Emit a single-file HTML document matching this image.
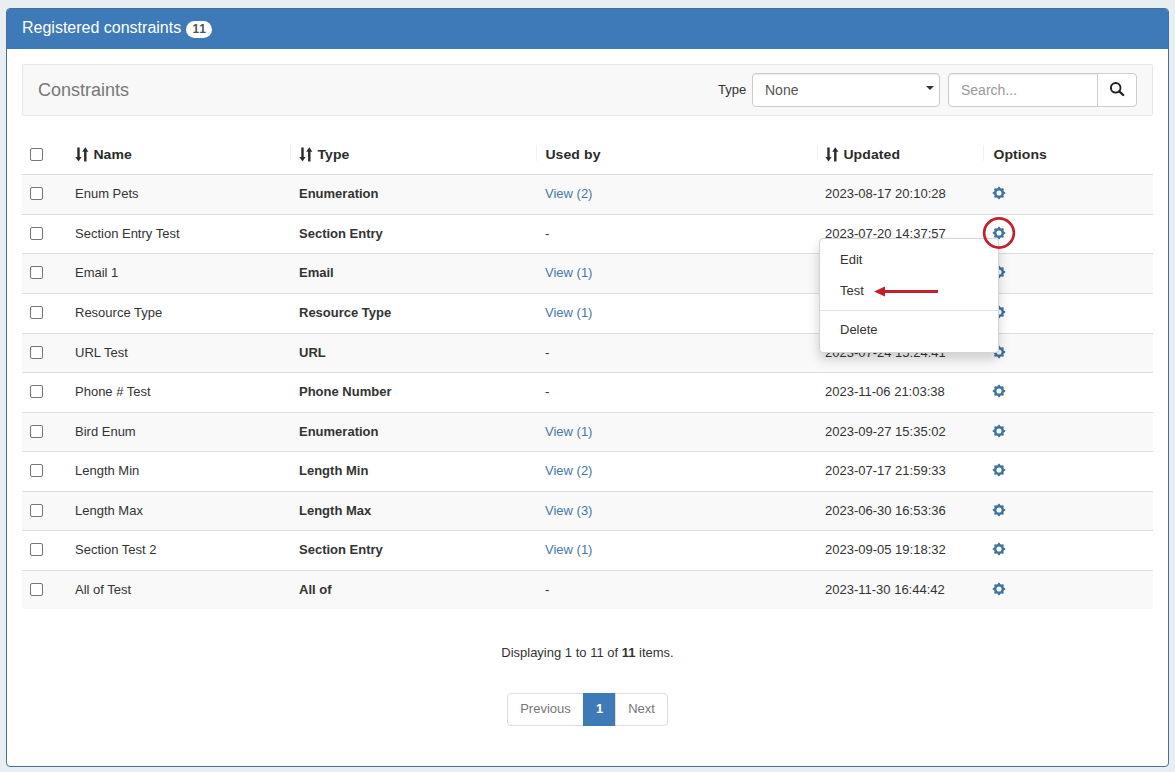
<!DOCTYPE html>
<html><head><meta charset="utf-8"><title>Registered constraints</title>
<style>
*{box-sizing:border-box}
html,body{margin:0;padding:0}
body{width:1175px;height:772px;overflow:hidden;background:#e9eef2;font-family:"Liberation Sans",sans-serif;font-size:13px;color:#333;position:relative}
.panel{position:absolute;left:6px;top:8px;width:1163px;height:759px;background:#fff;border:1px solid #4d6f92;border-radius:4px;overflow:hidden}
.ph{position:absolute;left:-1px;top:-1px;width:1163px;height:41px;background:#3e7ab8;color:#fff;font-size:16px}
.ph .t{position:absolute;left:16px;top:10px;line-height:20px;white-space:nowrap}
.badge{position:absolute;left:180px;top:13px;width:26px;height:17px;border-radius:9px;background:#fff;color:#4a5560;font-size:12px;font-weight:bold;text-align:center;line-height:17px;letter-spacing:0.6px;padding-left:1px}
.tb{position:absolute;left:22px;top:64px;width:1131px;height:52px;background:#f8f8f8;border:1px solid #e7e7e7;border-radius:2px}
.tb .h{position:absolute;left:15px;top:14px;font-size:18px;color:#777;line-height:22px}
.lbl{position:absolute;left:718px;top:82px;line-height:15px;font-size:13px;color:#333}
.sel{position:absolute;left:752px;top:73px;width:188px;height:34px;background:#fff;border:1px solid #ccc;border-radius:4px;font-size:14px;color:#555;line-height:32px;padding-left:12px;box-shadow:inset 0 1px 1px rgba(0,0,0,.075)}
.sel:after{content:"";position:absolute;right:5px;top:12px;border:4px solid transparent;border-top:4px solid #333;border-bottom:0}
.inp{position:absolute;left:948px;top:73px;width:150px;height:34px;background:#fff;border:1px solid #ccc;border-radius:4px 0 0 4px;font-size:14px;color:#999;line-height:32px;padding-left:12px;box-shadow:inset 0 1px 1px rgba(0,0,0,.075)}
.btn{position:absolute;left:1097px;top:73px;width:40px;height:34px;background:#fff;border:1px solid #ccc;border-radius:0 4px 4px 0}
.btn svg{position:absolute;left:11px;top:7px;width:16px;height:16px}
.thead{position:absolute;left:22px;top:135px;width:1131px;height:39px;font-weight:bold;color:#2b2b2b;font-size:14px}
.thead span,.row span{position:absolute;white-space:nowrap;line-height:16px}
.thead span{top:12px}
.thead b{display:inline-block;transform:scaleY(.95);transform-origin:0 12.6px;letter-spacing:.1px;position:relative;left:.4px;top:-.8px}
.row{position:absolute;left:22px;width:1131px;border-top:1px solid #ddd;background:#fff}
.row.odd{background:#f9f9f9}
.row span{top:11px}
.cb{left:8px;width:13px;height:13px;border:1px solid #767676;border-radius:2px;background:#fff}
.row .cb{top:12px} .thead .cb{top:13px}
.c1{left:53px} .c2{left:277px;font-weight:bold} .c3{left:523px} .c4{left:803px} .c5{left:971px}
.thead .c1,.thead .c2,.thead .c4{padding-left:18px}
.lnk{color:#4678a8;position:static!important}
.gear{position:absolute;left:970.3px;top:10.6px;width:14px;height:14px;fill:#41739f}
.sort{position:absolute;left:0.2px;top:-0.3px;width:14px;height:15px;fill:#2b2b2b}
.sep{position:absolute;top:10px;width:1px;height:16px;background:#f1f1f1}
.info{position:absolute;left:0;top:645px;width:1175px;text-align:center;line-height:16px}
.pg{position:absolute;top:693px;height:33px;border:1px solid #ddd;background:#fff;color:#777;font-size:13px;line-height:29px;text-align:center}
.menu{position:absolute;left:819px;top:238px;width:180px;height:115px;background:#fff;border:1px solid #d4d4d4;border-radius:4px;box-shadow:0 6px 12px rgba(0,0,0,.175);font-size:13px;color:#333}
.menu span{position:absolute;left:20px;line-height:16px}
.menu .dv{position:absolute;left:0;top:71px;width:178px;height:1px;background:#e5e5e5}
.circ{position:absolute;left:982.3px;top:216px;width:34px;height:34px}
.arrow{position:absolute;left:872px;top:283px;width:70px;height:16px}
</style></head><body>
<div class="panel"><div class="ph"><span class="t">Registered constraints</span><span class="badge">11</span></div></div>
<div class="tb"><span class="h">Constraints</span></div>
<span class="lbl">Type</span>
<div class="sel">None</div>
<div class="inp">Search...</div>
<div class="btn"><svg viewBox="0 0 16 16"><circle cx="6.7" cy="6.85" r="4.8" fill="none" stroke="#222" stroke-width="1.9"/><path d="M10.2 10.3L14.2 14.0" stroke="#222" stroke-width="2.3" stroke-linecap="round"/></svg></div>
<div class="thead"><span class="cb"></span><span class="c1"><svg class="sort" viewBox="0 0 14 15"><path d="M2.3 0.4h2.4v9.6h1.9L3.5 14.6 0.4 10h1.9z M9.1 14.4h2.4V4.8h1.9L10.3 0.3 7.2 4.8h1.9z"/></svg><b>Name</b></span><span class="c2"><svg class="sort" viewBox="0 0 14 15"><path d="M2.3 0.4h2.4v9.6h1.9L3.5 14.6 0.4 10h1.9z M9.1 14.4h2.4V4.8h1.9L10.3 0.3 7.2 4.8h1.9z"/></svg><b>Type</b></span><span class="c3"><b>Used by</b></span><span class="c4"><svg class="sort" viewBox="0 0 14 15"><path d="M2.3 0.4h2.4v9.6h1.9L3.5 14.6 0.4 10h1.9z M9.1 14.4h2.4V4.8h1.9L10.3 0.3 7.2 4.8h1.9z"/></svg><b>Updated</b></span><span class="c5"><b>Options</b></span>
<i class="sep" style="left:268px"></i><i class="sep" style="left:514px"></i><i class="sep" style="left:795px"></i><i class="sep" style="left:961px"></i></div>
<div class="row odd" style="top:174px;height:40px"><span class="cb"></span><span class="c1">Enum Pets</span><span class="c2">Enumeration</span><span class="c3"><span class="lnk">View (2)</span></span><span class="c4">2023-08-17 20:10:28</span><svg class="gear" viewBox="0 0 14 14"><path fill-rule="evenodd" d="M5.54 2.22 L6.45 0.67 L7.55 0.67 L8.46 2.22 L9.35 2.59 L11.08 2.14 L11.86 2.92 L11.41 4.65 L11.78 5.54 L13.33 6.45 L13.33 7.55 L11.78 8.46 L11.41 9.35 L11.86 11.08 L11.08 11.86 L9.35 11.41 L8.46 11.78 L7.55 13.33 L6.45 13.33 L5.54 11.78 L4.65 11.41 L2.92 11.86 L2.14 11.08 L2.59 9.35 L2.22 8.46 L0.67 7.55 L0.67 6.45 L2.22 5.54 L2.59 4.65 L2.14 2.92 L2.92 2.14 L4.65 2.59Z M4.45 7a2.55 2.55 0 1 0 5.1 0a2.55 2.55 0 1 0 -5.1 0Z"/></svg></div>
<div class="row" style="top:214px;height:39px"><span class="cb"></span><span class="c1">Section Entry Test</span><span class="c2">Section Entry</span><span class="c3">-</span><span class="c4">2023-07-20 14:37:57</span><svg class="gear" viewBox="0 0 14 14"><path fill-rule="evenodd" d="M5.54 2.22 L6.45 0.67 L7.55 0.67 L8.46 2.22 L9.35 2.59 L11.08 2.14 L11.86 2.92 L11.41 4.65 L11.78 5.54 L13.33 6.45 L13.33 7.55 L11.78 8.46 L11.41 9.35 L11.86 11.08 L11.08 11.86 L9.35 11.41 L8.46 11.78 L7.55 13.33 L6.45 13.33 L5.54 11.78 L4.65 11.41 L2.92 11.86 L2.14 11.08 L2.59 9.35 L2.22 8.46 L0.67 7.55 L0.67 6.45 L2.22 5.54 L2.59 4.65 L2.14 2.92 L2.92 2.14 L4.65 2.59Z M4.45 7a2.55 2.55 0 1 0 5.1 0a2.55 2.55 0 1 0 -5.1 0Z"/></svg></div>
<div class="row odd" style="top:253px;height:40px"><span class="cb"></span><span class="c1">Email 1</span><span class="c2">Email</span><span class="c3"><span class="lnk">View (1)</span></span><span class="c4">2023-08-25 17:12:03</span><svg class="gear" viewBox="0 0 14 14"><path fill-rule="evenodd" d="M5.54 2.22 L6.45 0.67 L7.55 0.67 L8.46 2.22 L9.35 2.59 L11.08 2.14 L11.86 2.92 L11.41 4.65 L11.78 5.54 L13.33 6.45 L13.33 7.55 L11.78 8.46 L11.41 9.35 L11.86 11.08 L11.08 11.86 L9.35 11.41 L8.46 11.78 L7.55 13.33 L6.45 13.33 L5.54 11.78 L4.65 11.41 L2.92 11.86 L2.14 11.08 L2.59 9.35 L2.22 8.46 L0.67 7.55 L0.67 6.45 L2.22 5.54 L2.59 4.65 L2.14 2.92 L2.92 2.14 L4.65 2.59Z M4.45 7a2.55 2.55 0 1 0 5.1 0a2.55 2.55 0 1 0 -5.1 0Z"/></svg></div>
<div class="row" style="top:293px;height:40px"><span class="cb"></span><span class="c1">Resource Type</span><span class="c2">Resource Type</span><span class="c3"><span class="lnk">View (1)</span></span><span class="c4">2023-09-12 18:45:10</span><svg class="gear" viewBox="0 0 14 14"><path fill-rule="evenodd" d="M5.54 2.22 L6.45 0.67 L7.55 0.67 L8.46 2.22 L9.35 2.59 L11.08 2.14 L11.86 2.92 L11.41 4.65 L11.78 5.54 L13.33 6.45 L13.33 7.55 L11.78 8.46 L11.41 9.35 L11.86 11.08 L11.08 11.86 L9.35 11.41 L8.46 11.78 L7.55 13.33 L6.45 13.33 L5.54 11.78 L4.65 11.41 L2.92 11.86 L2.14 11.08 L2.59 9.35 L2.22 8.46 L0.67 7.55 L0.67 6.45 L2.22 5.54 L2.59 4.65 L2.14 2.92 L2.92 2.14 L4.65 2.59Z M4.45 7a2.55 2.55 0 1 0 5.1 0a2.55 2.55 0 1 0 -5.1 0Z"/></svg></div>
<div class="row odd" style="top:333px;height:39px"><span class="cb"></span><span class="c1">URL Test</span><span class="c2">URL</span><span class="c3">-</span><span class="c4">2023-07-24 15:24:41</span><svg class="gear" viewBox="0 0 14 14"><path fill-rule="evenodd" d="M5.54 2.22 L6.45 0.67 L7.55 0.67 L8.46 2.22 L9.35 2.59 L11.08 2.14 L11.86 2.92 L11.41 4.65 L11.78 5.54 L13.33 6.45 L13.33 7.55 L11.78 8.46 L11.41 9.35 L11.86 11.08 L11.08 11.86 L9.35 11.41 L8.46 11.78 L7.55 13.33 L6.45 13.33 L5.54 11.78 L4.65 11.41 L2.92 11.86 L2.14 11.08 L2.59 9.35 L2.22 8.46 L0.67 7.55 L0.67 6.45 L2.22 5.54 L2.59 4.65 L2.14 2.92 L2.92 2.14 L4.65 2.59Z M4.45 7a2.55 2.55 0 1 0 5.1 0a2.55 2.55 0 1 0 -5.1 0Z"/></svg></div>
<div class="row" style="top:372px;height:40px"><span class="cb"></span><span class="c1">Phone # Test</span><span class="c2">Phone Number</span><span class="c3">-</span><span class="c4">2023-11-06 21:03:38</span><svg class="gear" viewBox="0 0 14 14"><path fill-rule="evenodd" d="M5.54 2.22 L6.45 0.67 L7.55 0.67 L8.46 2.22 L9.35 2.59 L11.08 2.14 L11.86 2.92 L11.41 4.65 L11.78 5.54 L13.33 6.45 L13.33 7.55 L11.78 8.46 L11.41 9.35 L11.86 11.08 L11.08 11.86 L9.35 11.41 L8.46 11.78 L7.55 13.33 L6.45 13.33 L5.54 11.78 L4.65 11.41 L2.92 11.86 L2.14 11.08 L2.59 9.35 L2.22 8.46 L0.67 7.55 L0.67 6.45 L2.22 5.54 L2.59 4.65 L2.14 2.92 L2.92 2.14 L4.65 2.59Z M4.45 7a2.55 2.55 0 1 0 5.1 0a2.55 2.55 0 1 0 -5.1 0Z"/></svg></div>
<div class="row odd" style="top:412px;height:39px"><span class="cb"></span><span class="c1">Bird Enum</span><span class="c2">Enumeration</span><span class="c3"><span class="lnk">View (1)</span></span><span class="c4">2023-09-27 15:35:02</span><svg class="gear" viewBox="0 0 14 14"><path fill-rule="evenodd" d="M5.54 2.22 L6.45 0.67 L7.55 0.67 L8.46 2.22 L9.35 2.59 L11.08 2.14 L11.86 2.92 L11.41 4.65 L11.78 5.54 L13.33 6.45 L13.33 7.55 L11.78 8.46 L11.41 9.35 L11.86 11.08 L11.08 11.86 L9.35 11.41 L8.46 11.78 L7.55 13.33 L6.45 13.33 L5.54 11.78 L4.65 11.41 L2.92 11.86 L2.14 11.08 L2.59 9.35 L2.22 8.46 L0.67 7.55 L0.67 6.45 L2.22 5.54 L2.59 4.65 L2.14 2.92 L2.92 2.14 L4.65 2.59Z M4.45 7a2.55 2.55 0 1 0 5.1 0a2.55 2.55 0 1 0 -5.1 0Z"/></svg></div>
<div class="row" style="top:451px;height:40px"><span class="cb"></span><span class="c1">Length Min</span><span class="c2">Length Min</span><span class="c3"><span class="lnk">View (2)</span></span><span class="c4">2023-07-17 21:59:33</span><svg class="gear" viewBox="0 0 14 14"><path fill-rule="evenodd" d="M5.54 2.22 L6.45 0.67 L7.55 0.67 L8.46 2.22 L9.35 2.59 L11.08 2.14 L11.86 2.92 L11.41 4.65 L11.78 5.54 L13.33 6.45 L13.33 7.55 L11.78 8.46 L11.41 9.35 L11.86 11.08 L11.08 11.86 L9.35 11.41 L8.46 11.78 L7.55 13.33 L6.45 13.33 L5.54 11.78 L4.65 11.41 L2.92 11.86 L2.14 11.08 L2.59 9.35 L2.22 8.46 L0.67 7.55 L0.67 6.45 L2.22 5.54 L2.59 4.65 L2.14 2.92 L2.92 2.14 L4.65 2.59Z M4.45 7a2.55 2.55 0 1 0 5.1 0a2.55 2.55 0 1 0 -5.1 0Z"/></svg></div>
<div class="row odd" style="top:491px;height:39px"><span class="cb"></span><span class="c1">Length Max</span><span class="c2">Length Max</span><span class="c3"><span class="lnk">View (3)</span></span><span class="c4">2023-06-30 16:53:36</span><svg class="gear" viewBox="0 0 14 14"><path fill-rule="evenodd" d="M5.54 2.22 L6.45 0.67 L7.55 0.67 L8.46 2.22 L9.35 2.59 L11.08 2.14 L11.86 2.92 L11.41 4.65 L11.78 5.54 L13.33 6.45 L13.33 7.55 L11.78 8.46 L11.41 9.35 L11.86 11.08 L11.08 11.86 L9.35 11.41 L8.46 11.78 L7.55 13.33 L6.45 13.33 L5.54 11.78 L4.65 11.41 L2.92 11.86 L2.14 11.08 L2.59 9.35 L2.22 8.46 L0.67 7.55 L0.67 6.45 L2.22 5.54 L2.59 4.65 L2.14 2.92 L2.92 2.14 L4.65 2.59Z M4.45 7a2.55 2.55 0 1 0 5.1 0a2.55 2.55 0 1 0 -5.1 0Z"/></svg></div>
<div class="row" style="top:530px;height:40px"><span class="cb"></span><span class="c1">Section Test 2</span><span class="c2">Section Entry</span><span class="c3"><span class="lnk">View (1)</span></span><span class="c4">2023-09-05 19:18:32</span><svg class="gear" viewBox="0 0 14 14"><path fill-rule="evenodd" d="M5.54 2.22 L6.45 0.67 L7.55 0.67 L8.46 2.22 L9.35 2.59 L11.08 2.14 L11.86 2.92 L11.41 4.65 L11.78 5.54 L13.33 6.45 L13.33 7.55 L11.78 8.46 L11.41 9.35 L11.86 11.08 L11.08 11.86 L9.35 11.41 L8.46 11.78 L7.55 13.33 L6.45 13.33 L5.54 11.78 L4.65 11.41 L2.92 11.86 L2.14 11.08 L2.59 9.35 L2.22 8.46 L0.67 7.55 L0.67 6.45 L2.22 5.54 L2.59 4.65 L2.14 2.92 L2.92 2.14 L4.65 2.59Z M4.45 7a2.55 2.55 0 1 0 5.1 0a2.55 2.55 0 1 0 -5.1 0Z"/></svg></div>
<div class="row odd" style="top:570px;height:39px"><span class="cb"></span><span class="c1">All of Test</span><span class="c2">All of</span><span class="c3">-</span><span class="c4">2023-11-30 16:44:42</span><svg class="gear" viewBox="0 0 14 14"><path fill-rule="evenodd" d="M5.54 2.22 L6.45 0.67 L7.55 0.67 L8.46 2.22 L9.35 2.59 L11.08 2.14 L11.86 2.92 L11.41 4.65 L11.78 5.54 L13.33 6.45 L13.33 7.55 L11.78 8.46 L11.41 9.35 L11.86 11.08 L11.08 11.86 L9.35 11.41 L8.46 11.78 L7.55 13.33 L6.45 13.33 L5.54 11.78 L4.65 11.41 L2.92 11.86 L2.14 11.08 L2.59 9.35 L2.22 8.46 L0.67 7.55 L0.67 6.45 L2.22 5.54 L2.59 4.65 L2.14 2.92 L2.92 2.14 L4.65 2.59Z M4.45 7a2.55 2.55 0 1 0 5.1 0a2.55 2.55 0 1 0 -5.1 0Z"/></svg></div>
<div class="info">Displaying 1 to 11 of <b>11</b> items.</div>
<div class="pg" style="left:507px;width:77px;border-radius:4px 0 0 4px">Previous</div>
<div class="pg" style="left:583px;width:33px;background:#3e7ab8;border-color:#3e7ab8;color:#fff;font-weight:bold">1</div>
<div class="pg" style="left:615px;width:53px;border-radius:0 4px 4px 0">Next</div>
<div class="menu"><span style="top:13px">Edit</span><span style="top:44px">Test</span><i class="dv"></i><span style="top:83px">Delete</span></div>
<svg class="circ" viewBox="0 0 34 34"><ellipse cx="17" cy="17" rx="14.85" ry="14.6" fill="none" stroke="#c4202c" stroke-width="2.7"/></svg>
<svg class="arrow" viewBox="0 0 70 16"><path d="M12 8.6H66" stroke="#c4202c" stroke-width="3"/><path d="M2 8.6L13 3.6V13.6Z" fill="#c4202c"/></svg>
</body></html>
